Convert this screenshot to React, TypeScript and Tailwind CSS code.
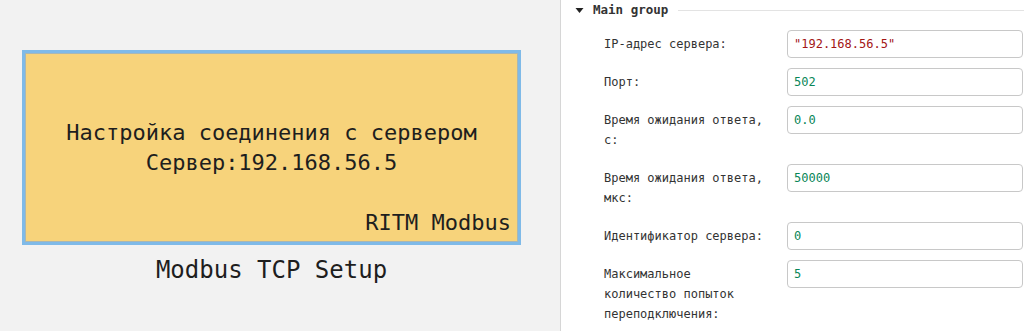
const MONO = "font-['DejaVu_Sans_Mono','Liberation_Mono',monospace]";

type Field = {
  label: string;
  value: string;
  kind: "string" | "number";
};

const FIELDS: Field[] = [
  { label: "IP-адрес сервера:", value: '"192.168.56.5"', kind: "string" },
  { label: "Порт:", value: "502", kind: "number" },
  { label: "Время ожидания ответа, с:", value: "0.0", kind: "number" },
  { label: "Время ожидания ответа, мкс:", value: "50000", kind: "number" },
  { label: "Идентификатор сервера:", value: "0", kind: "number" },
  { label: "Максимальное количество попыток переподключения:", value: "5", kind: "number" },
];

function BlockPreview() {
  return (
    <div className="ml-[22px] mt-[50px] flex w-[499px] flex-col items-center">
      <div className="w-full border-[3px] border-[#7fbae8]">
        <div className="relative flex h-[189px] flex-col items-center justify-center border border-[#a9b7b4] bg-[#f7d37b] text-[22px] leading-[30px] text-[#1e1e1e]">
          <div>Настройка соединения с сервером</div>
          <div>Сервер:192.168.56.5</div>
          {/* footer label sits over the block */}
          <div className="absolute bottom-[3px] right-[6px]">RITM Modbus</div>
        </div>
      </div>
      <div className="mt-[11px] text-[24px] leading-[28px] text-[#1e1e1e]">Modbus TCP Setup</div>
    </div>
  );
}

function FieldRow({ field }: { field: Field }) {
  return (
    <div className="flex items-start">
      <div className="w-[183px] shrink-0 py-[4px] pr-[20px] text-[12px] leading-[20px] text-[#333]">
        {field.label}
      </div>
      <div
        className={`flex h-[28px] w-[236px] items-center rounded-[4px] border border-[#c8c8c8] bg-white px-[6px] text-[12px] ${
          field.kind === "string" ? "text-[#a31515]" : "text-[#098658]"
        }`}
      >
        {field.value}
      </div>
    </div>
  );
}

function PropertyPanel() {
  return (
    <div className="h-full flex-1 bg-white pl-[13px] pr-[4px]">
      <div className="flex h-[20px] items-center">
        <svg width="9" height="7" viewBox="0 0 9 7" className="ml-[1px] mr-[9px]">
          <path d="M0.5 1 L8.5 1 L4.5 6 Z" fill="#222" />
        </svg>
        <span className="text-[12.5px] font-semibold text-[#333]">Main group</span>
        <div className="ml-[10px] h-px flex-1 bg-[#e3e3e3]" />
      </div>
      <div className="mt-[10px] flex flex-col gap-[10px] pl-[30px]">
        {FIELDS.map((f) => (
          <FieldRow key={f.label} field={f} />
        ))}
      </div>
    </div>
  );
}

export default function App() {
  return (
    <div className={`flex h-[331px] w-[1028px] overflow-hidden ${MONO}`}>
      <div className="h-full w-[561px] shrink-0 border-r border-[#d6d6d6] bg-[#f2f2f2]">
        <BlockPreview />
      </div>
      <PropertyPanel />
    </div>
  );
}
